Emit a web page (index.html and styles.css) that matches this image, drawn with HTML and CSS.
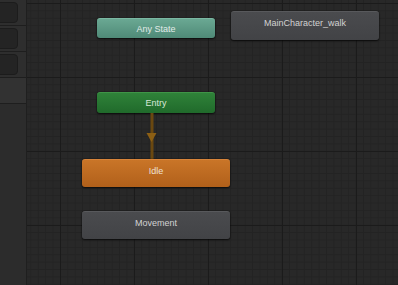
FILE: index.html
```html
<!DOCTYPE html>
<html lang="en">
<head>
    <meta charset="UTF-8">
    <meta name="viewport" content="width=device-width, initial-scale=1.0">
    <title>Animator</title>
    <link rel="stylesheet" href="styles.css">
</head>
<body>
    <div class="animator">
        <div class="side-panel">
            <div class="param-row"><div class="param-box"></div></div>
            <div class="param-row"><div class="param-box"></div></div>
            <div class="param-row"><div class="param-box"></div></div>
            <div class="param-row empty"></div>
        </div>
        <div class="graph">
            <div class="node any-state">Any State</div>
            <div class="node state walk">MainCharacter_walk</div>
            <div class="node entry">Entry</div>
            <svg class="transition" width="12" height="46" viewBox="0 0 12 46">
                <rect x="4.5" y="0" width="3" height="46" fill="#6a4810"/>
                <polygon points="0.5,20 10.5,20 5.5,29" fill="#8c5f14"/>
            </svg>
            <div class="node state idle">Idle</div>
            <div class="node state movement">Movement</div>
        </div>
    </div>
</body>
</html>
```

FILE: styles.css
```css
body {
    margin: 0;
    background-color: #282828;
    font-family: "Liberation Sans", Arial, sans-serif;
}
.animator {
    display: flex;
    width: 398px;
    height: 285px;
    overflow: hidden;
}
.side-panel {
    width: 26px;
    flex-shrink: 0;
    background-color: #2c2c2c;
    border-right: 1px solid #1f1f1f;
}
.param-row {
    height: 25px;
    border-bottom: 1px solid #1e1e1e;
    background-color: #2e2e2e;
    display: flex;
    align-items: center;
}
.param-row.empty {
    background-color: #323232;
}
.param-box {
    width: 22px;
    height: 21px;
    margin-left: -4px;
    background-color: #242424;
    border: 1px solid #1c1c1c;
    border-radius: 4px;
    box-sizing: border-box;
}
.graph {
    position: relative;
    flex: 1;
    background-color: #282828;
    background-image:
        linear-gradient(#1b1b1b 1px, transparent 1px),
        linear-gradient(90deg, #1b1b1b 1px, transparent 1px),
        linear-gradient(#232323 1px, transparent 1px),
        linear-gradient(90deg, #232323 1px, transparent 1px);
    background-size: 74px 74px, 74px 74px, 7.4px 7.4px, 7.4px 7.4px;
    background-position: 0 3px, 33px 0, 0 3px, 3.4px 0;
}
.node {
    position: absolute;
    box-sizing: border-box;
    border-radius: 3px;
    font-size: 9px;
    color: #dcdcdc;
    text-align: center;
    box-shadow: 0 1px 2px rgba(0, 0, 0, 0.7), 0 0 1px rgba(0, 0, 0, 0.8);
}
.any-state {
    left: 70px;
    top: 18px;
    width: 118px;
    height: 20px;
    line-height: 21px;
    background: linear-gradient(#6aa893, #4f8a77);
    border-top: 1px solid #7bb8a3;
    color: #e2ece8;
}
.entry {
    left: 70px;
    top: 92px;
    width: 118px;
    height: 21px;
    line-height: 20px;
    background: linear-gradient(#2f8239, #206a2b);
    border-top: 1px solid #3f9447;
    color: #d8e8d8;
}
.state {
    height: 29px;
    padding-top: 6px;
    line-height: 11px;
    background: linear-gradient(#4a4b4e, #424346);
    border-top: 1px solid #58595c;
    color: #d2d2d2;
}
.walk {
    left: 204px;
    top: 11px;
    width: 148px;
}
.idle {
    left: 55px;
    top: 159px;
    width: 148px;
    height: 28px;
    background: linear-gradient(#c97528, #b1601a);
    border-top: 1px solid #d7843a;
    color: #eee2d4;
}
.movement {
    left: 55px;
    top: 211px;
    width: 148px;
    height: 28px;
}
.transition {
    position: absolute;
    left: 119px;
    top: 113px;
}
```
